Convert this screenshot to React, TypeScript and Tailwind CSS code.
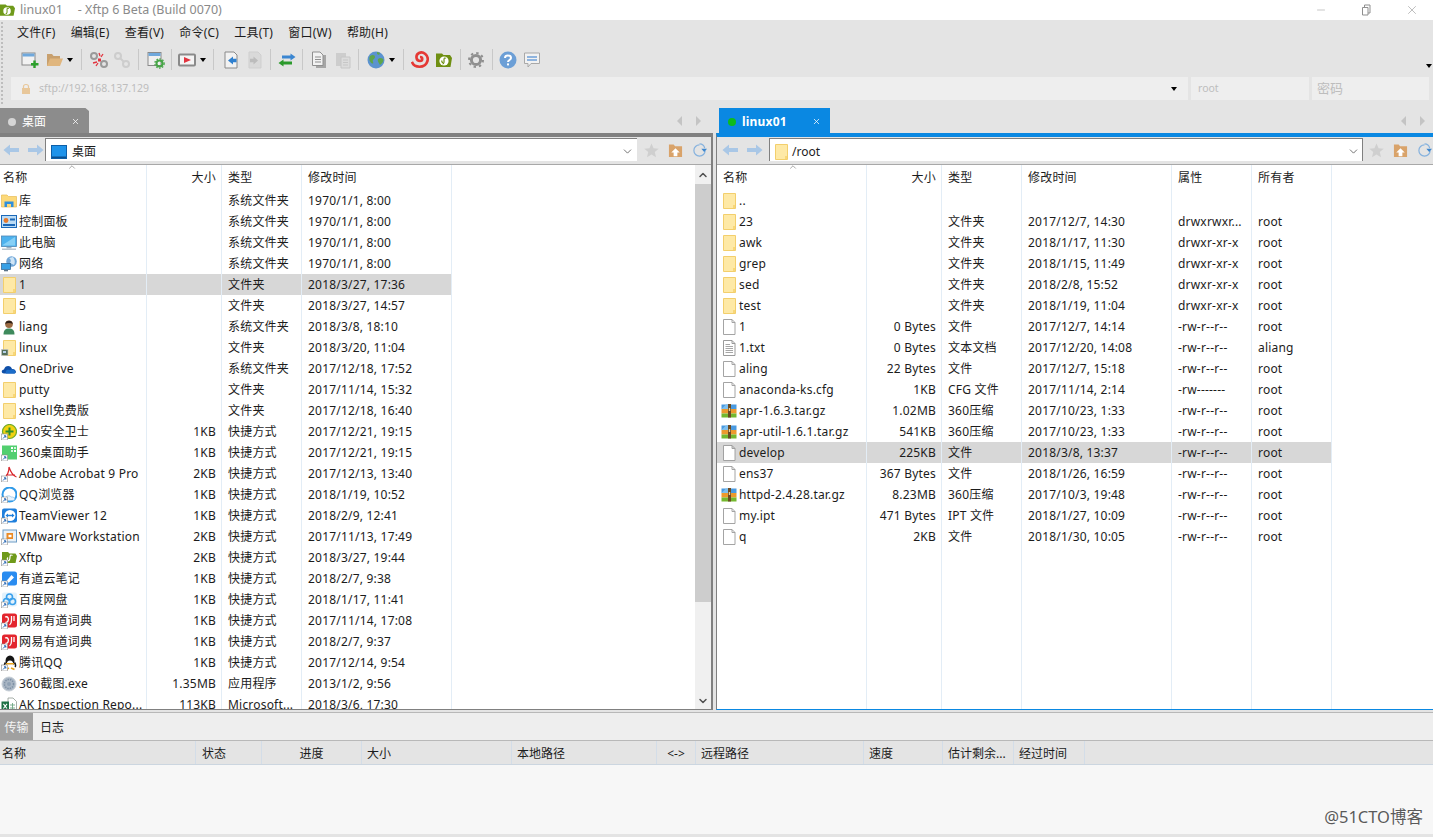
import { ChevronDown, ChevronUp, Minus, X } from "lucide-react";

type IconName =
  | "library" | "control" | "pc" | "network" | "folder" | "user" | "linkfolder" | "onedrive"
  | "safe360" | "desk360" | "acrobat" | "qqbrowser" | "teamviewer" | "vmware" | "xftp"
  | "ydnote" | "baidu" | "youdao" | "qq" | "shot360" | "excel" | "file" | "txt" | "rar" | "none";

interface FileRow {
  icon: IconName;
  name: string;
  size?: string;
  type?: string;
  time?: string;
  attr?: string;
  owner?: string;
  selected?: boolean;
}

const localFiles: FileRow[] = [
  { icon: "library", name: "库", type: "系统文件夹", time: "1970/1/1, 8:00" },
  { icon: "control", name: "控制面板", type: "系统文件夹", time: "1970/1/1, 8:00" },
  { icon: "pc", name: "此电脑", type: "系统文件夹", time: "1970/1/1, 8:00" },
  { icon: "network", name: "网络", type: "系统文件夹", time: "1970/1/1, 8:00" },
  { icon: "folder", name: "1", type: "文件夹", time: "2018/3/27, 17:36", selected: true },
  { icon: "folder", name: "5", type: "文件夹", time: "2018/3/27, 14:57" },
  { icon: "user", name: "liang", type: "系统文件夹", time: "2018/3/8, 18:10" },
  { icon: "linkfolder", name: "linux", type: "文件夹", time: "2018/3/20, 11:04" },
  { icon: "onedrive", name: "OneDrive", type: "系统文件夹", time: "2017/12/18, 17:52" },
  { icon: "folder", name: "putty", type: "文件夹", time: "2017/11/14, 15:32" },
  { icon: "folder", name: "xshell免费版", type: "文件夹", time: "2017/12/18, 16:40" },
  { icon: "safe360", name: "360安全卫士", size: "1KB", type: "快捷方式", time: "2017/12/21, 19:15" },
  { icon: "desk360", name: "360桌面助手", size: "1KB", type: "快捷方式", time: "2017/12/21, 19:15" },
  { icon: "acrobat", name: "Adobe Acrobat 9 Pro", size: "2KB", type: "快捷方式", time: "2017/12/13, 13:40" },
  { icon: "qqbrowser", name: "QQ浏览器", size: "1KB", type: "快捷方式", time: "2018/1/19, 10:52" },
  { icon: "teamviewer", name: "TeamViewer 12", size: "1KB", type: "快捷方式", time: "2018/2/9, 12:41" },
  { icon: "vmware", name: "VMware Workstation", size: "2KB", type: "快捷方式", time: "2017/11/13, 17:49" },
  { icon: "xftp", name: "Xftp", size: "2KB", type: "快捷方式", time: "2018/3/27, 19:44" },
  { icon: "ydnote", name: "有道云笔记", size: "1KB", type: "快捷方式", time: "2018/2/7, 9:38" },
  { icon: "baidu", name: "百度网盘", size: "1KB", type: "快捷方式", time: "2018/1/17, 11:41" },
  { icon: "youdao", name: "网易有道词典", size: "1KB", type: "快捷方式", time: "2017/11/14, 17:08" },
  { icon: "youdao", name: "网易有道词典", size: "1KB", type: "快捷方式", time: "2018/2/7, 9:37" },
  { icon: "qq", name: "腾讯QQ", size: "1KB", type: "快捷方式", time: "2017/12/14, 9:54" },
  { icon: "shot360", name: "360截图.exe", size: "1.35MB", type: "应用程序", time: "2013/1/2, 9:56" },
  { icon: "excel", name: "AK Inspection Repo...", size: "113KB", type: "Microsoft...", time: "2018/3/6, 17:30" },
];

const remoteFiles: FileRow[] = [
  { icon: "folder", name: ".." },
  { icon: "folder", name: "23", type: "文件夹", time: "2017/12/7, 14:30", attr: "drwxrwxr...", owner: "root" },
  { icon: "folder", name: "awk", type: "文件夹", time: "2018/1/17, 11:30", attr: "drwxr-xr-x", owner: "root" },
  { icon: "folder", name: "grep", type: "文件夹", time: "2018/1/15, 11:49", attr: "drwxr-xr-x", owner: "root" },
  { icon: "folder", name: "sed", type: "文件夹", time: "2018/2/8, 15:52", attr: "drwxr-xr-x", owner: "root" },
  { icon: "folder", name: "test", type: "文件夹", time: "2018/1/19, 11:04", attr: "drwxr-xr-x", owner: "root" },
  { icon: "file", name: "1", size: "0 Bytes", type: "文件", time: "2017/12/7, 14:14", attr: "-rw-r--r--", owner: "root" },
  { icon: "txt", name: "1.txt", size: "0 Bytes", type: "文本文档", time: "2017/12/20, 14:08", attr: "-rw-r--r--", owner: "aliang" },
  { icon: "file", name: "aling", size: "22 Bytes", type: "文件", time: "2017/12/7, 15:18", attr: "-rw-r--r--", owner: "root" },
  { icon: "file", name: "anaconda-ks.cfg", size: "1KB", type: "CFG 文件", time: "2017/11/14, 2:14", attr: "-rw-------", owner: "root" },
  { icon: "rar", name: "apr-1.6.3.tar.gz", size: "1.02MB", type: "360压缩", time: "2017/10/23, 1:33", attr: "-rw-r--r--", owner: "root" },
  { icon: "rar", name: "apr-util-1.6.1.tar.gz", size: "541KB", type: "360压缩", time: "2017/10/23, 1:33", attr: "-rw-r--r--", owner: "root" },
  { icon: "file", name: "develop", size: "225KB", type: "文件", time: "2018/3/8, 13:37", attr: "-rw-r--r--", owner: "root", selected: true },
  { icon: "file", name: "ens37", size: "367 Bytes", type: "文件", time: "2018/1/26, 16:59", attr: "-rw-r--r--", owner: "root" },
  { icon: "rar", name: "httpd-2.4.28.tar.gz", size: "8.23MB", type: "360压缩", time: "2017/10/3, 19:48", attr: "-rw-r--r--", owner: "root" },
  { icon: "file", name: "my.ipt", size: "471 Bytes", type: "IPT 文件", time: "2018/1/27, 10:09", attr: "-rw-r--r--", owner: "root" },
  { icon: "file", name: "q", size: "2KB", type: "文件", time: "2018/1/30, 10:05", attr: "-rw-r--r--", owner: "root" },
];

const menus = ["文件(F)", "编辑(E)", "查看(V)", "命令(C)", "工具(T)", "窗口(W)", "帮助(H)"];

function Shortcut() {
  return (
    <g>
      <rect x="0.5" y="10" width="6" height="6" fill="#fff" stroke="#8a8a8a" strokeWidth="0.6" />
      <path d="M2 14.5 L4.5 12 M3 11.8 H4.8 V13.6" stroke="#1c5fb0" strokeWidth="1" fill="none" />
    </g>
  );
}

function FolderShape() {
  return (
    <g>
      <path d="M2.5 0.5 H14.5 V15.5 H2.5 Z" fill="#fee9a6" stroke="#f3cf6c" />
      <path d="M12 15 V12 H14 V15 Z" fill="#f8d779" />
    </g>
  );
}

function FileIcon({ name }: { name: IconName }) {
  const body = () => {
    switch (name) {
      case "library":
        return (
          <g>
            <path d="M0.5 2 H6 L7.5 3.5 H15.5 V14 H0.5 Z" fill="#fcd97a" stroke="#e6bb55" strokeWidth="0.7" />
            <path d="M3.5 14 V8.5 H12.5 V14 H10 V11 H6 V14 Z" fill="#2f8fdc" />
          </g>
        );
      case "control":
        return (
          <g>
            <rect x="0.5" y="1.5" width="15" height="12" fill="#bcdcf5" stroke="#1c68b8" />
            <circle cx="5" cy="6.5" r="2.4" fill="#e8792b" />
            <rect x="9" y="4.5" width="5" height="2" fill="#1c68b8" />
            <rect x="2" y="10" width="12" height="2" fill="#1c68b8" />
          </g>
        );
      case "pc":
        return (
          <g>
            <rect x="0.5" y="1" width="15" height="10.5" fill="#4db2ee" stroke="#4f87b5" strokeWidth="0.8" />
            <path d="M1.5 10 L14 2 V10.5 H1.5 Z" fill="#87d0f6" />
            <rect x="5.5" y="12" width="5" height="1.5" fill="#9db2c4" />
            <rect x="1" y="13.5" width="14" height="1.5" fill="#b8c4ce" />
          </g>
        );
      case "network":
        return (
          <g>
            <circle cx="10.5" cy="5.5" r="5.3" fill="#6fa6d8" />
            <path d="M8 2 Q11 4 9 7 L13 9 Q15 5 12 1 Z" fill="#cfe5f6" />
            <rect x="0.5" y="7.5" width="9" height="6" fill="#37a0e6" stroke="#2a5f8d" strokeWidth="0.7" />
            <rect x="3" y="14" width="4" height="1.3" fill="#5c7489" />
          </g>
        );
      case "folder":
        return <FolderShape />;
      case "linkfolder":
        return (
          <g>
            <FolderShape />
            <rect x="0.5" y="9.5" width="6.5" height="6" fill="#55705a" stroke="#c9c9c9" strokeWidth="0.6" />
            <rect x="2" y="11" width="3" height="2" fill="#b5d0e8" />
          </g>
        );
      case "user":
        return (
          <g>
            <path d="M2.5 15.5 C2.5 10.5 5 9.5 8 9.5 C11 9.5 13.5 10.5 13.5 15.5 Z" fill="#3e8a5c" />
            <circle cx="8" cy="5.2" r="3.8" fill="#9c6a42" />
            <path d="M4.2 5 C4.2 0.5 11.8 0.5 11.8 5 C9.5 3.6 6.5 3.6 4.2 5 Z" fill="#2d2017" />
          </g>
        );
      case "onedrive":
        return (
          <g>
            <path d="M3 12.5 C0 12.5 0 8.5 3 8.5 C4 4 10 4 11 8 C15 7.5 16.5 12.5 13 12.5 Z" fill="#0f4fa8" />
            <path d="M5 12.5 C3.8 10 6 8 8.5 9 C11 7.5 15.5 9 14 12.5 Z" fill="#1b6dc9" />
          </g>
        );
      case "safe360":
        return (
          <g>
            <circle cx="8.5" cy="7.5" r="7" fill="#f2d20f" stroke="#6eaa2d" strokeWidth="1.2" />
            <path d="M8.5 3.5 V11.5 M4.5 7.5 H12.5" stroke="#2f8e2f" strokeWidth="2" />
            <Shortcut />
          </g>
        );
      case "desk360":
        return (
          <g>
            <rect x="1" y="0.5" width="15" height="14" fill="#52cf6f" />
            <rect x="10" y="2" width="2" height="2" fill="#fff" />
            <rect x="13" y="2" width="2" height="2" fill="#d2f5da" />
            <rect x="10" y="5" width="2" height="2" fill="#d2f5da" />
            <rect x="13" y="5" width="2" height="2" fill="#fff" />
            <Shortcut />
          </g>
        );
      case "acrobat":
        return (
          <g>
            <path d="M8 1 C10 7 12 10 15.5 11 M8 1 C8 6 6 10 3 12 M5 9 H14" stroke="#d8252a" strokeWidth="1.2" fill="none" />
            <Shortcut />
          </g>
        );
      case "qqbrowser":
        return (
          <g>
            <circle cx="8.5" cy="7.5" r="7" fill="none" stroke="#2f9ae8" strokeWidth="2" />
            <path d="M4 12 C4 8.5 9 8 10 10 C14 9.5 15 13 12 13.5 H5 Z" fill="#e9f3fb" stroke="#7cb8e6" strokeWidth="0.6" />
            <Shortcut />
          </g>
        );
      case "teamviewer":
        return (
          <g>
            <rect x="1" y="0.5" width="15" height="14" rx="2" fill="#1f7fdc" />
            <circle cx="9" cy="7.5" r="5.5" fill="#fff" />
            <path d="M4.5 7.5 L7 5.5 V6.8 H11 V5.5 L13.5 7.5 L11 9.5 V8.2 H7 V9.5 Z" fill="#1f7fdc" />
            <Shortcut />
          </g>
        );
      case "vmware":
        return (
          <g>
            <rect x="2" y="1" width="13.5" height="12" fill="#e9f1f8" stroke="#6c9cc6" />
            <rect x="5.5" y="4" width="6.5" height="6" fill="#ea8a25" />
            <rect x="7.5" y="5.8" width="3" height="2.4" fill="#fff" />
            <Shortcut />
          </g>
        );
      case "xftp":
        return (
          <g>
            <path d="M1 2 H7 L8.5 3.5 H14.5 L16 6 L14.5 13 H1 Z" fill="#6f9a1a" />
            <path d="M6.5 11 C9 11 9 9 9 7 C9 5 10 4.5 11.5 5.5 M7 7.5 C5.5 9 6.5 11 8.5 10.5" stroke="#fff" strokeWidth="1.2" fill="none" />
            <Shortcut />
          </g>
        );
      case "ydnote":
        return (
          <g>
            <rect x="1" y="0.5" width="15" height="14" rx="2.5" fill="#2a8cf0" />
            <path d="M5.5 10 L10.5 4 L13 6.5 L8 11.5 H5.5 Z" fill="#fff" />
            <Shortcut />
          </g>
        );
      case "baidu":
        return (
          <g>
            <rect x="1" y="0.5" width="15" height="14" rx="2" fill="#e3f2fc" />
            <circle cx="8.5" cy="5" r="3" fill="none" stroke="#3aa0ec" strokeWidth="1.6" />
            <circle cx="5.5" cy="9.5" r="3" fill="none" stroke="#3aa0ec" strokeWidth="1.6" />
            <circle cx="11.5" cy="9.5" r="3" fill="none" stroke="#3aa0ec" strokeWidth="1.6" />
            <Shortcut />
          </g>
        );
      case "youdao":
        return (
          <g>
            <rect x="1" y="0.5" width="15" height="14" rx="2.5" fill="#e3262e" />
            <path d="M4 4 C7 3 8 5.5 7 8 C6.5 9.5 5 9.5 4.5 9 M10.5 3 V7 C10.5 10 10 11 8.5 12 M13 3 V8" stroke="#fff" strokeWidth="1.3" fill="none" />
            <Shortcut />
          </g>
        );
      case "qq":
        return (
          <g>
            <ellipse cx="9" cy="6" rx="4.5" ry="5.5" fill="#151515" />
            <ellipse cx="9" cy="9" rx="3.2" ry="3.6" fill="#fff" />
            <path d="M5 8 H13 L13 9.5 H5 Z" fill="#e8a31c" />
            <path d="M5 14.5 L8 13 M13.5 14.5 L10 13" stroke="#e8a31c" strokeWidth="1.6" />
            <path d="M4.5 7.5 C3 10 3 11 4 12 M13.5 7.5 C15 10 15 11 14 12" stroke="#151515" strokeWidth="1.5" fill="none" />
            <Shortcut />
          </g>
        );
      case "shot360":
        return (
          <g>
            <circle cx="8" cy="8" r="7" fill="#a9b6c4" stroke="#c6ced6" />
            <circle cx="8" cy="8" r="4.5" fill="none" stroke="#7f91a5" strokeWidth="1.5" strokeDasharray="1.4 1" />
            <circle cx="8" cy="8" r="2" fill="#8fa1b4" />
          </g>
        );
      case "excel":
        return (
          <g>
            <path d="M7 1 H12 L15.5 4.5 V15 H7 Z" fill="#fff" stroke="#8f9a93" strokeWidth="0.8" />
            <path d="M9 8 H14 M9 11 H14 M11.5 6 V13" stroke="#6ea784" strokeWidth="0.9" />
            <rect x="0.5" y="4.5" width="7.5" height="9" fill="#1e7145" />
            <path d="M2.4 6.8 L6 11.5 M6 6.8 L2.4 11.5" stroke="#fff" strokeWidth="1.1" />
          </g>
        );
      case "file":
        return <path d="M2.5 0.5 H11 L14 3.5 V15.5 H2.5 Z M11 0.5 V3.5 H14" fill="#fff" stroke="#9a9a9a" strokeWidth="0.9" />;
      case "txt":
        return (
          <g>
            <path d="M2.5 0.5 H11 L14 3.5 V15.5 H2.5 Z M11 0.5 V3.5 H14" fill="#fff" stroke="#8f8f8f" strokeWidth="0.9" />
            <path d="M4.5 4.5 H9 M4.5 6.5 H12 M4.5 8.5 H12 M4.5 10.5 H12 M4.5 12.5 H12" stroke="#8f8f8f" strokeWidth="0.8" />
          </g>
        );
      case "rar":
        return (
          <g>
            <rect x="0.5" y="1.5" width="15" height="4.5" fill="#4a9ae0" />
            <path d="M0.5 6 L5 1.5 H9 V6 Z" fill="#7ec0ef" />
            <rect x="0.5" y="6" width="15" height="4.5" fill="#ec9a2c" />
            <rect x="0.5" y="10.5" width="15" height="4" fill="#74b82e" />
            <rect x="7" y="1" width="3" height="13.5" fill="#6b4a22" />
            <rect x="7.8" y="5" width="1.4" height="3" fill="#e8d39a" />
          </g>
        );
      default:
        return null;
    }
  };
  return (
    <svg viewBox="0 0 16 16" className="w-4 h-4 shrink-0">
      {body()}
    </svg>
  );
}

function Caret({ className = "" }: { className?: string }) {
  return <span className={`block w-0 h-0 shrink-0 border-x-[3px] border-x-transparent border-t-[4px] border-t-black ${className}`} />;
}

function Sep({ className }: { className: string }) {
  return <span className={`w-px h-[21px] bg-[#c8c8c8] shrink-0 ${className}`} />;
}

function ToolIcon({ children, className = "" }: { children: React.ReactNode; className?: string }) {
  return (
    <svg viewBox="0 0 18 18" className={`w-[18px] h-[18px] shrink-0 ${className}`}>
      {children}
    </svg>
  );
}

function Toolbar() {
  return (
    <div className="h-[32px] flex items-center pl-[21px] pb-[3px]">
      <ToolIcon>
        <rect x="1" y="2" width="13" height="12" fill="#f2f2f2" stroke="#8a8a8a" />
        <rect x="1.5" y="2.5" width="12" height="3" fill="#6fa8dc" />
        <path d="M13.5 9.5 V17 M10 13.2 H17.5" stroke="#2ca02c" strokeWidth="2.4" />
      </ToolIcon>
      <ToolIcon className="ml-[7px]">
        <path d="M1 3 H6 L7.5 5 H14 V15 H1 Z" fill="#c8a06e" />
        <path d="M1 15 L4 7.5 H17 L14 15 Z" fill="#e0b67e" />
      </ToolIcon>
      <Caret className="ml-[3px]" />
      <Sep className="ml-[8px]" />
      <ToolIcon className="ml-[8px]">
        <circle cx="4" cy="5" r="3" fill="none" stroke="#9a9a9a" strokeWidth="2" />
        <circle cx="14" cy="13" r="3" fill="none" stroke="#9a9a9a" strokeWidth="2" />
        <path d="M9 2 L10 5 M13 3 L11 6 M3 12 L7 11 M6 15 L8 12" stroke="#e2343f" strokeWidth="1.3" />
        <rect x="8" y="7.5" width="3" height="3" fill="#e2343f" />
      </ToolIcon>
      <ToolIcon className="ml-[5px]">
        <circle cx="5" cy="5" r="3" fill="none" stroke="#cdcdcd" strokeWidth="2" />
        <circle cx="13" cy="13" r="3" fill="none" stroke="#cdcdcd" strokeWidth="2" />
        <path d="M7 7 L11 11" stroke="#cdcdcd" strokeWidth="2" />
      </ToolIcon>
      <Sep className="ml-[7px]" />
      <ToolIcon className="ml-[8px]">
        <rect x="1" y="1.5" width="13" height="13" fill="#f0f0f0" stroke="#8a8a8a" />
        <rect x="1.5" y="2" width="12" height="3" fill="#6fa8dc" />
        <circle cx="12.5" cy="12.5" r="3" fill="none" stroke="#46a546" strokeWidth="2" />
        <circle cx="12.5" cy="12.5" r="4.6" fill="none" stroke="#46a546" strokeWidth="1.4" strokeDasharray="1.5 1.5" />
      </ToolIcon>
      <Sep className="ml-[6px]" />
      <ToolIcon className="ml-[6px]">
        <rect x="1" y="3.5" width="16" height="11" rx="1" fill="#f4f4f4" stroke="#8a8a8a" strokeWidth="2" />
        <path d="M6 6 L13 9 L6 12 Z" fill="#e2343f" />
      </ToolIcon>
      <Caret className="ml-[4px]" />
      <Sep className="ml-[7px]" />
      <ToolIcon className="ml-[8px]">
        <path d="M3 1 H12 L15 4 V17 H3 Z" fill="#f2f2f2" stroke="#8a8a8a" />
        <path d="M6 9.5 L11 5.5 V7.8 H14.5 V11.2 H11 V13.5 Z" fill="#2f80cf" />
      </ToolIcon>
      <ToolIcon className="ml-[6px]">
        <path d="M3 1 H12 L15 4 V17 H3 Z" fill="#d9d9d9" stroke="#cfcfcf" />
        <path d="M12 9.5 L7.5 5.5 V7.8 H4 V11.2 H7.5 V13.5 Z" fill="#bcbcbc" />
      </ToolIcon>
      <Sep className="ml-[6px]" />
      <ToolIcon className="ml-[7px]">
        <path d="M17.5 6 L12.5 2.5 V4.5 H4 V7.5 H12.5 V9.5 Z" fill="#3b86d1" />
        <path d="M0.5 12 L5.5 8.5 V10.5 H14 V13.5 H5.5 V15.5 Z" fill="#2c9a2c" />
      </ToolIcon>
      <Sep className="ml-[6px]" />
      <ToolIcon className="ml-[7px]">
        <path d="M6 4 H16 V17 H6 Z" fill="#a6a6a6" />
        <path d="M2.5 1 H10 L13 4 V14.5 H2.5 Z" fill="#f2f2f2" stroke="#8f8f8f" />
        <path d="M5 6 H11 M5 8.5 H11 M5 11 H11" stroke="#8f8f8f" />
      </ToolIcon>
      <ToolIcon className="ml-[6px]">
        <path d="M2 2 H12 V15 H2 Z" fill="#cdcdcd" />
        <path d="M7 6 H16 V17 H7 Z" fill="#dcdcdc" stroke="#c6c6c6" />
        <path d="M9 9 H14 M9 11.5 H14 M9 14 H14" stroke="#c6c6c6" />
      </ToolIcon>
      <Sep className="ml-[6px]" />
      <ToolIcon className="ml-[8px]">
        <circle cx="9" cy="9" r="8.5" fill="#5b93cf" />
        <path d="M3 5 C6 3 8 4 8 6 C8 8 5 8 6 11 C7 13 5 13 3.5 11 C2 9 2 7 3 5 Z M11 8 C13 6 16 7 16.5 9 C16 12 14 13 13 14 C12 12 10 10 11 8 Z M10 1 L13 2 L12 4 L10 3 Z" fill="#5ea64a" />
      </ToolIcon>
      <Caret className="ml-[4px]" />
      <Sep className="ml-[8px]" />
      <ToolIcon className="ml-[7px]">
        <path d="M1 11 C3 17 14 18 16.5 10 C18 4 12 0 8 2 C4 4 5 10 9 10 C12 10 12 6 9 6 " fill="none" stroke="#e53935" strokeWidth="2.6" />
        <path d="M1 9.5 C2 12 3 14 5.5 15 L2 15 Z" fill="#e53935" />
      </ToolIcon>
      <ToolIcon className="ml-[6px]">
        <path d="M1 2.5 H7 L8.5 4 H15 L17 7 L15.5 16 H1 Z" fill="#6f8f12" />
        <circle cx="9" cy="10" r="4.6" fill="#fff" />
        <path d="M7.5 13 C9.5 13 9 10 9 8.5 C9 7 10 6.6 11 7.4 M7 9.5 C6.5 10.5 7 11.5 8 11.5" stroke="#6f8f12" strokeWidth="1.2" fill="none" />
      </ToolIcon>
      <Sep className="ml-[7px]" />
      <ToolIcon className="ml-[6px]">
        <circle cx="9" cy="9" r="4.6" fill="none" stroke="#8f8f8f" strokeWidth="3" />
        <circle cx="9" cy="9" r="7" fill="none" stroke="#8f8f8f" strokeWidth="2" strokeDasharray="2.4 3.1" />
      </ToolIcon>
      <Sep className="ml-[7px]" />
      <ToolIcon className="ml-[6px]">
        <circle cx="9" cy="9" r="8.5" fill="#6c9fd6" />
        <path d="M6 7 C6 3.8 12 3.8 12 7 C12 9 9 9 9 11" fill="none" stroke="#fff" strokeWidth="2" />
        <rect x="8" y="12.4" width="2" height="2" fill="#fff" />
      </ToolIcon>
      <ToolIcon className="ml-[6px]">
        <path d="M1.5 2 H16.5 V12.5 H8 L5 16 V12.5 H1.5 Z" fill="#f2f2f2" stroke="#a8a8a8" strokeLinejoin="round" />
        <path d="M4 6 H14 M4 9 H14" stroke="#6fa0d8" strokeWidth="1.6" />
      </ToolIcon>
    </div>
  );
}

function AddressBar() {
  return (
    <div className="h-[23px] ml-[11px] mr-[4px] flex gap-[3px] text-[#bdbdbd] text-[10.5px]">
      <div className="w-[1177px] bg-[#eeeeee] flex items-center pl-[9px] pr-[11px]">
        <svg viewBox="0 0 12 12" className="w-3 h-3">
          <path d="M3.5 5 V3.5 C3.5 0.8 8.5 0.8 8.5 3.5 V5" fill="none" stroke="#e8c79a" strokeWidth="1.2" />
          <rect x="2" y="5" width="8" height="6" fill="#e8c79a" />
        </svg>
        <span className="ml-[7px] flex-1">sftp://192.168.137.129</span>
        <Caret />
      </div>
      <div className="w-[118px] bg-[#eeeeee] flex items-center pl-[7px]">root</div>
      <div className="flex-1 bg-[#eeeeee] flex items-center pl-[5px] text-[13px]">密码</div>
    </div>
  );
}

function NavButtons({ className }: { className: string }) {
  return (
    <div className={`flex items-center gap-[9px] ${className}`}>
      {["M0.5 7 L7 1.5 V5 H16 V9 H7 V12.5 Z", "M15.5 7 L9 1.5 V5 H0 V9 H9 V12.5 Z"].map((d) => (
        <svg key={d} viewBox="0 0 16 14" className="w-4 h-[14px]">
          <path d={d} fill="#a9c7e6" />
        </svg>
      ))}
    </div>
  );
}

function NavTools({ className }: { className: string }) {
  return (
    <div className={`flex items-center ${className}`}>
      <svg viewBox="0 0 16 16" className="w-[15px] h-[15px]">
        <path d="M8 0.5 L10.2 5.6 L15.7 6.1 L11.5 9.7 L12.8 15.2 L8 12.3 L3.2 15.2 L4.5 9.7 L0.3 6.1 L5.8 5.6 Z" fill="#cfcfcf" />
      </svg>
      <svg viewBox="0 0 16 16" className="w-[15px] h-[15px] ml-[9px]">
        <path d="M1 1.5 H6 L7.5 3.5 H15 V15 H1 Z" fill="#d9a36a" />
        <path d="M8 5.5 L12.5 10 H10 V14 H6 V10 H3.5 Z" fill="#fff" />
      </svg>
      <svg viewBox="0 0 16 16" className="w-[15px] h-[15px] ml-[9px]">
        <path d="M8 2 A6 6 0 1 0 14 8" fill="none" stroke="#86b2de" strokeWidth="1.3" />
        <path d="M8 1 C11 1 13 3 13.5 5.5" fill="none" stroke="#86b2de" strokeWidth="1.3" />
        <path d="M10 6 H16 L13 9.5 Z" fill="#3d87cf" />
      </svg>
    </div>
  );
}

function TabArrows({ className }: { className: string }) {
  return (
    <div className={`flex items-center gap-[14px] ${className}`}>
      <span className="w-0 h-0 border-y-[5px] border-y-transparent border-r-[5px] border-r-[#c4c4c4]" />
      <span className="w-0 h-0 border-y-[5px] border-y-transparent border-l-[5px] border-l-[#c4c4c4]" />
    </div>
  );
}

const divider = "border-r border-[#e3edf6]";

function Cells({ widths, row, gap }: { widths: number[]; row?: FileRow; gap: string }) {
  return (
    <>
      <div className={`${divider} ${gap} flex items-center overflow-hidden whitespace-nowrap`} style={{ width: widths[0] }}>
        {row && <FileIcon name={row.icon} />}
        {row && <span className="ml-[2px]">{row.name}</span>}
      </div>
      <div className={`${divider} flex items-center justify-end pr-[5px]`} style={{ width: widths[1] }}>{row?.size}</div>
      <div className={`${divider} flex items-center pl-[6px] whitespace-nowrap overflow-hidden`} style={{ width: widths[2] }}>{row?.type}</div>
      <div className={`${divider} flex items-center pl-[6px]`} style={{ width: widths[3] }}>{row?.time}</div>
      {widths.length > 4 && <div className={`${divider} flex items-center pl-[6px]`} style={{ width: widths[4] }}>{row?.attr}</div>}
      {widths.length > 4 && <div className={`${divider} flex items-center pl-[6px]`} style={{ width: widths[5] }}>{row?.owner}</div>}
    </>
  );
}

function FileList({ rows, widths, headers, gap, headPad, caretPos }: { rows: FileRow[]; widths: number[]; headers: string[]; gap: string; headPad: string; caretPos: string }) {
  return (
    <div className="flex-1 min-w-0 flex flex-col bg-white overflow-hidden text-[12px] tracking-[0.2px] text-[#1c1c1c]">
      <div className="h-[25px] shrink-0 flex relative">
        <div className={`${divider} ${headPad} flex items-center pt-px`} style={{ width: widths[0] }}>{headers[0]}</div>
        <div className={`${divider} flex items-center justify-end pr-[5px] pt-px`} style={{ width: widths[1] }}>{headers[1]}</div>
        {headers.slice(2).map((h, i) => (
          <div key={h} className={`${divider} flex items-center pl-[6px] pt-px`} style={{ width: widths[i + 2] }}>{h}</div>
        ))}
        <ChevronUp className={`absolute top-[-3px] w-3 h-[10px] text-[#777] ${caretPos}`} strokeWidth={1.5} />
      </div>
      {rows.map((row, i) => (
        <div key={i} className={`h-[21px] shrink-0 flex ${row.selected ? "w-fit bg-[#d7d7d7]" : ""}`}>
          <Cells widths={widths} row={row} gap={gap} />
        </div>
      ))}
      <div className="flex-1 flex">
        <Cells widths={widths} gap={gap} />
      </div>
    </div>
  );
}

function Scrollbar() {
  return (
    <div className="w-[16px] shrink-0 bg-[#f0f0f0] flex flex-col items-center">
      <div className="h-[19px] shrink-0 flex items-center"><ChevronUp className="w-3 h-3 text-[#505050]" strokeWidth={3} /></div>
      <div className="w-full h-[418px] bg-[#cdcdcd]" />
      <div className="flex-1" />
      <div className="h-[16px] shrink-0 flex items-center"><ChevronDown className="w-3 h-3 text-[#505050]" strokeWidth={3} /></div>
    </div>
  );
}

function LocalPanel() {
  return (
    <section className="w-[713px] flex flex-col">
      <div className="h-[25px] flex items-center">
        <div className="w-[89px] h-full bg-[#8c8c8c] text-white text-[12px] flex items-center pl-[8px] pt-[2px] [clip-path:polygon(0_0,96%_0,100%_12%,100%_100%,0_100%)]">
          <span className="w-[8px] h-[8px] rounded-full bg-[#d5d5d5]" />
          <span className="ml-[6px]">桌面</span>
          <X className="w-[9px] h-[9px] ml-[25px]" strokeWidth={2} />
        </div>
        <TabArrows className="ml-[588px]" />
      </div>
      <div className="flex-1 min-h-0 flex flex-col border-t-[4px] border-t-[#808080] border-r-2 border-r-[#808080] border-b border-b-[#808080]">
        <div className="h-[28px] shrink-0 flex items-start border-b border-[#a8a8a8] pt-px">
          <NavButtons className="w-[45px] h-[24px] pl-[3px]" />
          <div className="w-[592px] h-[23px] bg-white border-l border-t border-[#808080] flex items-center pl-[5px] pr-[3px] pt-[3px] text-[12px] text-[#1c1c1c]">
            <svg viewBox="0 0 16 14" className="w-4 h-[14px]">
              <rect x="0.5" y="0.5" width="15" height="13" fill="#1e93ea" stroke="#0d5fa8" />
              <rect x="1" y="11.5" width="14" height="1.5" fill="#0b4f8e" />
            </svg>
            <span className="ml-[5px] flex-1">桌面</span>
            <ChevronDown className="w-[13px] h-[13px] text-[#555]" strokeWidth={1.5} />
          </div>
          <NavTools className="ml-[7px] h-[24px]" />
        </div>
        <div className="flex-1 min-h-0 flex">
          <FileList rows={localFiles} widths={[147, 75, 80, 150]} headers={["名称", "大小", "类型", "修改时间"]} gap="pl-[1px]" headPad="pl-[3px]" caretPos="left-[66px]" />
          <Scrollbar />
        </div>
      </div>
    </section>
  );
}

function RemotePanel() {
  return (
    <section className="flex-1 min-w-0 flex flex-col ml-[3px]">
      <div className="h-[25px] flex items-center">
        <div className="ml-[3px] w-[111px] h-full bg-[#0a88e2] text-white text-[12px] font-bold flex items-center pl-[9px] pt-[2px]">
          <span className="w-[8px] h-[8px] rounded-full bg-[#0dbb1d]" />
          <span className="ml-[6px] tracking-[0.2px]">linux01</span>
          <X className="w-[9px] h-[9px] ml-[25px] font-normal" strokeWidth={2} />
        </div>
        <TabArrows className="ml-[571px]" />
      </div>
      <div className="flex-1 min-h-0 flex flex-col border-t-[4px] border-t-[#0a88e2] border-l border-l-[#808080] border-b border-b-[#0a88e2]">
        <div className="h-[28px] shrink-0 flex items-start border-b border-[#a8a8a8] pt-px">
          <NavButtons className="w-[52px] h-[24px] pl-[5px]" />
          <div className="w-[594px] h-[23px] bg-white border-x border-t border-[#808080] flex items-center pl-[3px] pr-[2px] pt-[3px] text-[12px] text-[#1c1c1c]">
            <svg viewBox="0 0 16 16" className="w-4 h-4"><FolderShape /></svg>
            <span className="ml-[3px] flex-1">/root</span>
            <ChevronDown className="w-[13px] h-[13px] text-[#555]" strokeWidth={1.5} />
          </div>
          <NavTools className="ml-[6px] h-[24px]" />
        </div>
        <FileList rows={remoteFiles} widths={[150, 75, 80, 150, 80, 80]} headers={["名称", "大小", "类型", "修改时间", "属性", "所有者"]} gap="pl-[4px]" headPad="pl-[6px]" caretPos="left-[70px]" />
      </div>
    </section>
  );
}

const transferCols = [
  { label: "名称", w: 196, cls: "pl-[2px]" },
  { label: "状态", w: 66, cls: "pl-[6px]" },
  { label: "进度", w: 100, cls: "justify-center" },
  { label: "大小", w: 150, cls: "pl-[5px]" },
  { label: "本地路径", w: 145, cls: "pl-[5px]" },
  { label: "<->", w: 39, cls: "justify-center" },
  { label: "远程路径", w: 168, cls: "pl-[5px]" },
  { label: "速度", w: 79, cls: "pl-[5px]" },
  { label: "估计剩余...", w: 71, cls: "pl-[5px]" },
  { label: "经过时间", w: 71, cls: "pl-[5px]" },
];

function TransferPanel() {
  return (
    <section className="flex-1 min-h-0 mt-[2px] flex flex-col text-[12px] text-[#1c1c1c]">
      <div className="h-[29px] shrink-0 flex bg-[#eeeeee] border-y border-[#b8b8b8]">
        <div className="w-[33px] bg-[#a0a0a0] text-[#f4f4f4] flex items-center justify-center pt-[2px]">传输</div>
        <div className="ml-[7px] flex items-center pt-[2px]">日志</div>
      </div>
      <div className="h-[24px] shrink-0 flex bg-[#e4e4e4] border-b border-[#ccd6e0]">
        {transferCols.map((c) => (
          <div key={c.label} className={`flex items-center pt-[2px] border-r border-[#d3dde8] ${c.cls}`} style={{ width: c.w }}>{c.label}</div>
        ))}
      </div>
      <div className="flex-1 bg-[#f7f7f7]" />
      <div className="h-[3px] shrink-0 bg-[#e4e4e4]" />
    </section>
  );
}

export default function App() {
  return (
    <div className="relative w-[1433px] h-[837px] overflow-hidden flex flex-col bg-[#e4e4e4] font-['Noto_Sans','Noto_Sans_CJK_SC',sans-serif]">
      <header className="h-[20px] shrink-0 bg-white flex items-center text-[12.5px] text-[#8a8a8a]">
        <svg viewBox="0 0 16 14" className="w-[15px] h-[14px]">
          <path d="M0 1 H6 L7.5 2.5 H14 L16 5 L14.5 13 H0 Z" fill="#6f9a1a" />
          <circle cx="7.5" cy="8" r="4" fill="#fff" />
          <path d="M6 11 C8 11 7.5 8 7.5 6.5 C7.5 5 8.5 4.8 9.5 5.5" stroke="#6f9a1a" strokeWidth="1.1" fill="none" />
        </svg>
        <span className="ml-[5px]">linux01</span>
        <span className="ml-[15px]">- Xftp 6 Beta (Build 0070)</span>
        <div className="ml-auto flex items-center text-[#8f8f8f]">
          <Minus className="w-[12px] h-[12px]" strokeWidth={1} />
          <svg viewBox="0 0 12 12" className="w-[12px] h-[12px] ml-[33px]">
            <path d="M2.5 3.5 H8 V11 H2.5 Z M4.5 3.5 V1 H10 V9 H8" fill="none" stroke="#8f8f8f" />
          </svg>
          <X className="w-[14px] h-[14px] ml-[33px] mr-[14px]" strokeWidth={1} />
        </div>
      </header>

      <div className="h-[80px] shrink-0 relative">
        <div className="absolute left-[1px] top-[2px] h-[82px] border-l-2 border-dotted border-[#bdbdbd]" />
        <nav className="h-[25px] flex items-center pl-[17px] gap-[15.2px] text-[12px] tracking-[0.2px] text-[#1c1c1c]">
          {menus.map((m) => <span key={m}>{m}</span>)}
        </nav>
        <Toolbar />
        <AddressBar />
        <Caret className="absolute right-[1px] top-[44px]" />
      </div>

      <main className="h-[610px] shrink-0 pt-[8px] flex">
        <LocalPanel />
        <RemotePanel />
      </main>

      <TransferPanel />

      <div className="absolute right-[10px] bottom-[7px] text-[16.5px] text-[#5a5a5a] [text-shadow:0_0_2px_#fff]">@51CTO博客</div>
    </div>
  );
}
